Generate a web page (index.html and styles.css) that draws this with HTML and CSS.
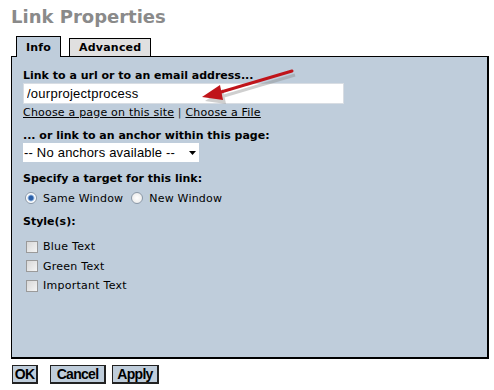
FILE: index.html
```html
<!DOCTYPE html>
<html>
<head>
    <title>Link Properties</title>
    <link rel="stylesheet" href="styles.css">
</head>
<body>
    <h1 class="title">Link Properties</h1>

    <div class="tabs">
        <div class="tab tab-active">Info</div>
        <div class="tab">Advanced</div>
    </div>

    <div class="panel">
        <label class="label" for="url">Link to a url or to an email address...</label>
        <input class="url" type="text" id="url" value="/ourprojectprocess">
        <div class="links">
            <a href="#">Choose a page on this site</a> <span class="sep">|</span> <a href="#">Choose a File</a>
        </div>

        <label class="label label-gap" for="anchor">... or link to an anchor within this page:</label>
        <div class="select-box">
            <select id="anchor" class="select">
                <option>-- No anchors available --</option>
            </select>
            <svg class="select-arrow" width="7" height="4" viewBox="0 0 7 4"><path d="M0 0h7L3.5 4z" fill="#000"/></svg>
        </div>

        <div class="label label-gap2">Specify a target for this link:</div>
        <div class="radios">
            <label class="opt"><input type="radio" name="target" checked> Same Window</label>
            <label class="opt"><input type="radio" name="target"> New Window</label>
        </div>

        <div class="label label-gap">Style(s):</div>
        <div class="checks">
            <label class="opt"><input type="checkbox"> Blue Text</label>
            <label class="opt"><input type="checkbox"> Green Text</label>
            <label class="opt"><input type="checkbox"> Important Text</label>
        </div>
    </div>

    <div class="buttons">
        <button class="btn btn-ok">OK</button>
        <button class="btn btn-cancel">Cancel</button>
        <button class="btn btn-apply">Apply</button>
    </div>

    <!-- red arrow pointing at the url box -->
    <svg class="arrow" width="110" height="45" viewBox="0 0 110 45">
        <g transform="translate(3,4)" fill="#888" opacity="0.4">
            <path d="M93 2 L22 23" stroke="#888" stroke-width="3"/>
            <path d="M3 28 L21 16 L24 31 z"/>
        </g>
        <path d="M93 2 L22 23" stroke="#c0141a" stroke-width="3" stroke-linecap="round"/>
        <path d="M3 28 L21 16 L24 31 z" fill="#c0141a"/>
    </svg>
</body>
</html>
```

FILE: styles.css
```css
body {
    margin: 0;
    padding: 0 5px 0 11px;
    font-family: "DejaVu Sans", Verdana, sans-serif;
    font-size: 11px;
    color: #000;
    background-color: #fff;
    position: relative;
}

.title {
    margin: 0;
    padding-top: 6px;
    height: 30px;
    font-size: 18px;
    font-weight: bold;
    color: #8a8a8a;
}

.tabs {
    display: flex;
    align-items: flex-end;
    padding-left: 5px;
    height: 20px;
}

.tab {
    height: 17px;
    padding: 0 9px;
    margin-right: 8px;
    line-height: 17px;
    font-weight: bold;
    letter-spacing: 0.2px;
    background-color: #e0e0e0;
    border: 1px solid #000;
    border-bottom: none;
}

.tab-active {
    height: 20px;
    line-height: 22px;
    background-color: #bfcddb;
    position: relative;
    top: 1px;
    padding: 0 9px;
}

.panel {
    box-sizing: border-box;
    height: 303px;
    padding: 12px 11px 0 11px;
    background-color: #bfcddb;
    border: 1px solid #000;
    border-right-width: 2px;
    border-bottom-width: 2px;
}

.label {
    display: block;
    font-weight: bold;
    height: 14px;
    line-height: 14px;
}

.label-gap {
    margin-top: 9px;
}

.label-gap2 {
    margin-top: 10px;
}

.url {
    display: block;
    box-sizing: border-box;
    width: 321px;
    height: 21px;
    margin: 0;
    padding: 0 3px;
    border: 1px solid #d8dde3;
    font-family: "Liberation Sans", Arial, sans-serif;
    font-size: 13px;
    letter-spacing: 0.25px;
    background-color: #fff;
}

.links {
    height: 14px;
    line-height: 14px;
    padding-top: 2px;
    letter-spacing: 0.2px;
}

.links a {
    color: #000;
}

.sep {
    color: #333;
}

.select-box {
    display: flex;
    align-items: center;
    width: 176px;
    height: 19px;
    background-color: #fff;
}

.select {
    appearance: none;
    border: none;
    background: transparent;
    padding: 0 0 0 1px;
    margin: 0;
    font-family: "Liberation Sans", Arial, sans-serif;
    font-size: 13px;
    letter-spacing: 0.2px;
    color: #000;
    width: 163px;
}

.select-arrow {
    margin-left: 3px;
}

.radios {
    display: flex;
    height: 16px;
    margin-top: 4px;
    align-items: center;
    padding-left: 2px;
    letter-spacing: 0.2px;
}

.radios .opt {
    margin-right: 8px;
}

.opt {
    display: flex;
    align-items: center;
}

input[type="radio"] {
    appearance: none;
    width: 12px;
    height: 12px;
    margin: 0 6px 0 0;
    border: 1px solid #8b99a8;
    border-radius: 50%;
    background: radial-gradient(circle, #fff 0, #e6e6e6 100%);
}

input[type="radio"]:checked {
    background: radial-gradient(circle, #2b5fa8 0, #2b5fa8 2px, #9fc0e6 3px, #fff 4px);
}

.checks {
    padding-top: 8px;
    padding-left: 3px;
    letter-spacing: 0.25px;
}

.checks .opt {
    height: 19.5px;
}

input[type="checkbox"] {
    appearance: none;
    width: 12px;
    height: 12px;
    margin: 0 5px 0 0;
    border: 1px solid #9a9a9a;
    background: linear-gradient(135deg, #d8d8d8, #f4f4f4);
}

.buttons {
    display: flex;
    margin-top: 6px;
    padding-left: 1px;
}

.btn {
    height: 19px;
    padding: 0;
    font-family: "Liberation Sans", Arial, sans-serif;
    font-size: 14px;
    font-weight: bold;
    letter-spacing: -0.7px;
    background-color: #bfcddb;
    border: 1px solid #222;
    border-right-width: 2px;
    border-bottom-width: 2px;
    color: #000;
}

.btn-ok {
    width: 26px;
}

.btn-cancel {
    width: 56px;
    margin-left: 12px;
}

.btn-apply {
    width: 47px;
    margin-left: 6px;
}

.arrow {
    position: absolute;
    left: 199px;
    top: 69px;
}
```
